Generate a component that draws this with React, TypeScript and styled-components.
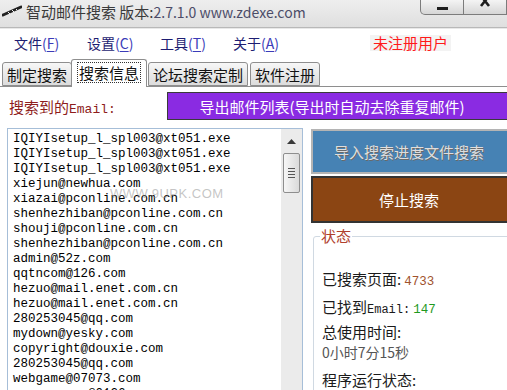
import styled, { createGlobalStyle } from "styled-components";

const GlobalStyle = createGlobalStyle`
  html, body {
    margin: 0;
    padding: 0;
    background: #ffffff;
  }
  body {
    font-family: "Noto Sans", "Noto Sans CJK SC", sans-serif;
  }
`;

const cjk = `"Noto Sans CJK SC", "Noto Sans", sans-serif`;
const mono = `"Liberation Mono", "Noto Sans CJK SC", monospace`;

const Window = styled.div`
  width: 507px;
  height: 390px;
  overflow: hidden;
  display: flex;
  flex-direction: column;
  background: #ffffff;
`;

const TitleBar = styled.div`
  position: relative;
  height: 27px;
  flex-shrink: 0;
  display: flex;
  align-items: center;
  gap: 4px;
  padding-left: 2px;
  background: linear-gradient(#eeeeee, #dfdfdf);
  border-bottom: 1px solid #b8b8b8;
  box-shadow: 0 1px 0 #e8e8e8;
`;

const TitleText = styled.span`
  font-family: ${cjk};
  font-size: 15px;
  color: #3a3a3a;
  margin-top: -5px;
  white-space: nowrap;
`;

const Version = styled.span`
  font-size: 14px;
  color: #4c4c68;
`;

const WinButtons = styled.div`
  position: absolute;
  top: 0;
  right: 0;
  display: flex;
`;

const WinButton = styled.div<{ $first?: boolean }>`
  width: 42px;
  height: 14px;
  display: flex;
  align-items: flex-start;
  justify-content: center;
  background: linear-gradient(#f4f4f4, #d6d6d6);
  border: 1px solid #7c7c7c;
  border-top: none;
  border-left: ${(p) => (p.$first ? "1px solid #7c7c7c" : "none")};
  border-bottom-left-radius: ${(p) => (p.$first ? "5px" : "0")};
  overflow: hidden;
`;

const MinGlyph = styled.div`
  width: 11px;
  height: 3px;
  margin-top: 7px;
  background: #1e1e1e;
`;

const MenuBar = styled.div`
  height: 30px;
  flex-shrink: 0;
  display: flex;
  align-items: center;
  padding-left: 14px;
  font-family: ${cjk};
  font-size: 14px;
`;

const MenuItem = styled.span`
  width: 73px;
  color: #1d1d72;
  white-space: nowrap;
`;

const Accel = styled.span`
  color: #3b3bb8;
  u {
    text-decoration: underline;
    text-underline-offset: 2px;
  }
`;

const Unregistered = styled.span`
  margin-left: 64px;
  padding: 0 3px;
  background: #f3f3f3;
  color: #ff1a1a;
  font-size: 15px;
  line-height: 16px;
`;

const TabStrip = styled.div`
  height: 28px;
  flex-shrink: 0;
  display: flex;
  align-items: flex-end;
  padding-left: 2px;
  border-bottom: 1px solid #8e8e8e;
`;

const Tab = styled.div<{ $active?: boolean }>`
  position: relative;
  height: ${(p) => (p.$active ? "27px" : "22px")};
  margin: ${(p) => (p.$active ? "0 -1px -1px -1px" : "0 0 0 2px")};
  padding: 0 ${(p) => (p.$active ? "6px" : "4px")};
  display: flex;
  align-items: center;
  font-family: ${cjk};
  font-size: 15px;
  color: #111111;
  background: ${(p) =>
    p.$active ? "#ffffff" : "linear-gradient(#f7f7f7, #dcdcdc)"};
  border: 1px solid #8e8e8e;
  border-bottom: ${(p) => (p.$active ? "none" : "1px solid #8e8e8e")};
  border-radius: 3px 3px 0 0;
  z-index: ${(p) => (p.$active ? 1 : 0)};
  &:first-child {
    margin-left: 0;
  }
`;

const FocusText = styled.span`
  outline: 1px dotted #333333;
  line-height: 19px;
  padding: 0 1px;
  margin-top: -3px;
`;

const Content = styled.div`
  flex: 1;
  min-height: 0;
  display: flex;
  flex-direction: column;
  padding-top: 5px;
`;

const TopRow = styled.div`
  height: 28px;
  flex-shrink: 0;
  display: flex;
  align-items: center;
  margin-bottom: 8px;
`;

const FoundLabel = styled.div`
  width: 167px;
  flex-shrink: 0;
  padding-left: 9px;
  box-sizing: border-box;
  font-family: ${cjk};
  font-size: 15px;
  color: #8e1c1c;
  white-space: nowrap;
`;

const MonoPart = styled.span<{ $size?: number }>`
  font-family: ${mono};
  font-size: ${(p) => p.$size ?? 13}px;
`;

const ExportButton = styled.div`
  width: 344px;
  height: 28px;
  flex-shrink: 0;
  box-sizing: border-box;
  display: flex;
  align-items: center;
  justify-content: center;
  padding-right: 14px;
  background: #8a2be2;
  border: 1px solid #3a3a3a;
  color: #ffffff;
  font-family: ${cjk};
  font-size: 15px;
  white-space: nowrap;
`;

const Body = styled.div`
  flex: 1;
  min-height: 0;
  display: flex;
  gap: 8px;
  padding-left: 7px;
`;

const ListBox = styled.div`
  position: relative;
  width: 296px;
  flex-shrink: 0;
  box-sizing: border-box;
  border: 1px solid #a6bed8;
  border-bottom: none;
  display: flex;
  overflow: hidden;
`;

const Lines = styled.div`
  flex: 1;
  padding: 3px 0 0 5px;
  font-family: ${mono};
  font-size: 12.5px;
  line-height: 15px;
  color: #000000;
  white-space: nowrap;
`;

const Watermark = styled.div`
  position: absolute;
  left: 102px;
  top: 57px;
  font-family: "Liberation Sans", sans-serif;
  font-size: 13px;
  letter-spacing: 0.5px;
  color: rgba(140, 140, 140, 0.5);
  pointer-events: none;
`;

const ScrollBar = styled.div`
  width: 21px;
  flex-shrink: 0;
  background: #ebebeb;
  display: flex;
  flex-direction: column;
  align-items: center;
`;

const ScrollArrow = styled.div`
  height: 24px;
  display: flex;
  align-items: center;
  justify-content: center;
`;

const ScrollThumb = styled.div`
  width: 17px;
  height: 40px;
  box-sizing: border-box;
  border: 1px solid #8e8e8e;
  border-radius: 2px;
  background: linear-gradient(90deg, #f6f6f6, #dadada);
  display: flex;
  flex-direction: column;
  align-items: center;
  justify-content: center;
  gap: 2px;
`;

const Grip = styled.div`
  width: 7px;
  height: 1px;
  background: #555555;
`;

const RightColumn = styled.div`
  width: 200px;
  flex-shrink: 0;
  display: flex;
  flex-direction: column;
  padding-top: 1px;
  min-height: 0;
`;

const ActionButton = styled.div<{ $bg: string; $border: string; $height: number; $gap?: number }>`
  height: ${(p) => p.$height}px;
  flex-shrink: 0;
  margin-top: ${(p) => p.$gap ?? 0}px;
  box-sizing: border-box;
  display: flex;
  align-items: center;
  justify-content: center;
  padding-right: 4px;
  background: ${(p) => p.$bg};
  border: 2px solid ${(p) => p.$border};
  font-family: ${cjk};
  font-size: 15px;
  white-space: nowrap;
`;

const ImportText = styled.span`
  color: #dedede;
  text-shadow: 1px 1px 0 #6a6a6a;
`;

const StopText = styled.span`
  color: #ffffff;
`;

const StatusBox = styled.fieldset`
  margin: 3px 0 0 2px;
  padding: 0 8px;
  border: 1px solid #d0d9e2;
  border-radius: 3px;
  flex-shrink: 0;
  height: 200px;
  font-family: ${cjk};
  font-size: 15px;
  color: #1a1a1a;
`;

const StatusLegend = styled.legend`
  padding: 0 1px;
  margin-left: -2px;
  font-size: 15px;
  line-height: 20px;
  color: #b0402c;
`;

const StatLine = styled.div<{ $gap?: number; $muted?: boolean }>`
  height: 20px;
  line-height: 20px;
  margin-top: ${(p) => p.$gap ?? 0}px;
  white-space: nowrap;
  font-size: ${(p) => (p.$muted ? "14px" : "15px")};
  color: ${(p) => (p.$muted ? "#555555" : "#1a1a1a")};
`;

const StatValue = styled.span<{ $color: string }>`
  font-family: ${mono};
  font-size: 12.5px;
  line-height: 1;
  color: ${(p) => p.$color};
  margin-left: 3px;
`;

const emails = [
  "IQIYIsetup_l_spl003@xt051.exe",
  "IQIYIsetup_l_spl003@xt051.exe",
  "IQIYIsetup_l_spl003@xt051.exe",
  "xiejun@newhua.com",
  "xiazai@pconline.com.cn",
  "shenhezhiban@pconline.com.cn",
  "shouji@pconline.com.cn",
  "shenhezhiban@pconline.com.cn",
  "admin@52z.com",
  "qqtncom@126.com",
  "hezuo@mail.enet.com.cn",
  "hezuo@mail.enet.com.cn",
  "280253045@qq.com",
  "mydown@yesky.com",
  "copyright@douxie.com",
  "280253045@qq.com",
  "webgame@07073.com",
  "macromeans@0126.com",
];

const menus = [
  ["文件", "F"],
  ["设置", "C"],
  ["工具", "T"],
  ["关于", "A"],
];

const PenIcon = () => (
  <svg width="20" height="12" viewBox="0 0 20 12" style={{ marginTop: -6 }}>
    <path d="M1 10 L19 2" stroke="#222" strokeWidth="3" strokeLinecap="round" />
    <path d="M6 7 L8 9 M10 5 L12 7 M14 4 L15 5" stroke="#f2f2f2" strokeWidth="1" />
  </svg>
);

const CloseGlyph = () => (
  <svg width="12" height="8" viewBox="0 0 12 8">
    <path d="M2 -4 L10 6 M10 -4 L2 6" stroke="#1e1e1e" strokeWidth="2.6" />
  </svg>
);

export default function App() {
  return (
    <>
      <GlobalStyle />
      <Window>
        <TitleBar>
          <PenIcon />
          <TitleText>
            智动邮件搜索 版本:<Version>2.7.1.0 www.zdexe.com</Version>
          </TitleText>
          <WinButtons>
            <WinButton $first>
              <MinGlyph />
            </WinButton>
            <WinButton>
              <CloseGlyph />
            </WinButton>
          </WinButtons>
        </TitleBar>

        <MenuBar>
          {menus.map(([label, key]) => (
            <MenuItem key={key}>
              {label}
              <Accel>
                (<u>{key}</u>)
              </Accel>
            </MenuItem>
          ))}
          <Unregistered>未注册用户</Unregistered>
        </MenuBar>

        <TabStrip>
          <Tab>制定搜索</Tab>
          <Tab $active>
            <FocusText>搜索信息</FocusText>
          </Tab>
          <Tab>论坛搜索定制</Tab>
          <Tab>软件注册</Tab>
        </TabStrip>

        <Content>
          <TopRow>
            <FoundLabel>
              搜索到的<MonoPart>Email:</MonoPart>
            </FoundLabel>
            <ExportButton>导出邮件列表(导出时自动去除重复邮件)</ExportButton>
          </TopRow>

          <Body>
            <ListBox>
              <Lines>
                {emails.map((e, i) => (
                  <div key={i}>{e}</div>
                ))}
              </Lines>
              <Watermark>WWW.9UPK.COM</Watermark>
              <ScrollBar>
                <ScrollArrow>
                  <svg width="9" height="5" viewBox="0 0 9 5">
                    <path d="M0 5 L4.5 0 L9 5 Z" fill="#3a3a3a" />
                  </svg>
                </ScrollArrow>
                <ScrollThumb>
                  <Grip />
                  <Grip />
                  <Grip />
                  <Grip />
                </ScrollThumb>
              </ScrollBar>
            </ListBox>

            <RightColumn>
              <ActionButton $bg="#4682b4" $border="#b4b4b4" $height={45}>
                <ImportText>导入搜索进度文件搜索</ImportText>
              </ActionButton>
              <ActionButton $bg="#8b4513" $border="#333333" $height={47} $gap={2}>
                <StopText>停止搜索</StopText>
              </ActionButton>
              <StatusBox>
                <StatusLegend>状态</StatusLegend>
                <StatLine $gap={23}>
                  已搜索页面:<StatValue $color="#a0522d">4733</StatValue>
                </StatLine>
                <StatLine $gap={8}>
                  已找到<MonoPart $size={12}>Email:</MonoPart>
                  <StatValue $color="#1f9a1f">147</StatValue>
                </StatLine>
                <StatLine $gap={5}>总使用时间:</StatLine>
                <StatLine $muted>0小时7分15秒</StatLine>
                <StatLine $gap={8}>程序运行状态:</StatLine>
              </StatusBox>
            </RightColumn>
          </Body>
        </Content>
      </Window>
    </>
  );
}
